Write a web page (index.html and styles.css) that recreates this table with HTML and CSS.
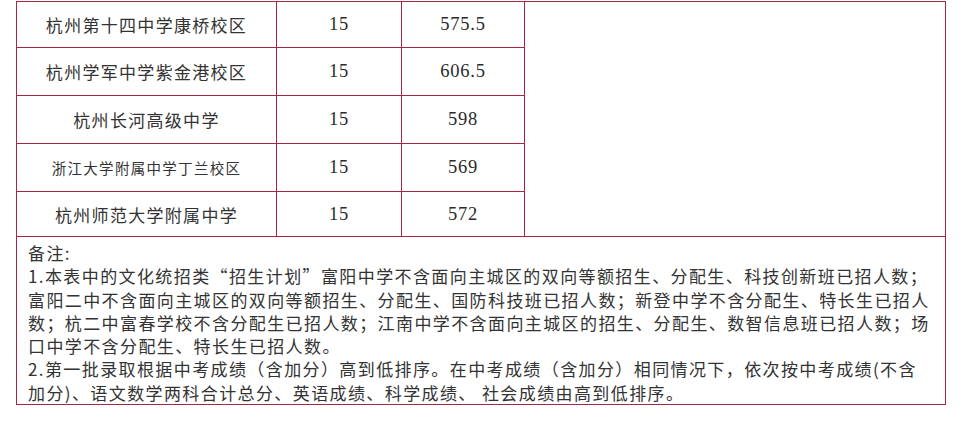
FILE: index.html
```html
<!DOCTYPE html>
<html lang="zh-CN">
<head>
<meta charset="utf-8">
<title>招生计划</title>
<link rel="stylesheet" href="styles.css">
</head>
<body>
<table class="plan">
  <colgroup>
    <col class="c-name">
    <col class="c-num">
    <col class="c-score">
    <col class="c-blank">
  </colgroup>
  <tbody>
    <tr class="r1">
      <td class="name">杭州第十四中学康桥校区</td>
      <td class="num">15</td>
      <td class="num">575.5</td>
      <td class="blank" rowspan="5"></td>
    </tr>
    <tr class="r2">
      <td class="name">杭州学军中学紫金港校区</td>
      <td class="num">15</td>
      <td class="num">606.5</td>
    </tr>
    <tr class="r3">
      <td class="name">杭州长河高级中学</td>
      <td class="num">15</td>
      <td class="num">598</td>
    </tr>
    <tr class="r4">
      <td class="name small">浙江大学附属中学丁兰校区</td>
      <td class="num">15</td>
      <td class="num">569</td>
    </tr>
    <tr class="r5">
      <td class="name">杭州师范大学附属中学</td>
      <td class="num">15</td>
      <td class="num">572</td>
    </tr>
    <tr class="notes-row">
      <td class="notes" colspan="4">
        <p>备注:</p>
        <p>1.本表中的文化统招类“招生计划”富阳中学不含面向主城区的双向等额招生、分配生、科技创新班已招人数；<br>富阳二中不含面向主城区的双向等额招生、分配生、国防科技班已招人数；新登中学不含分配生、特长生已招人<br>数；杭二中富春学校不含分配生已招人数；江南中学不含面向主城区的招生、分配生、数智信息班已招人数；场<br>口中学不含分配生、特长生已招人数。</p>
        <p>2.第一批录取根据中考成绩（含加分）高到低排序。在中考成绩（含加分）相同情况下，依次按中考成绩(不含<br>加分)、语文数学两科合计总分、英语成绩、科学成绩、 社会成绩由高到低排序。</p>
      </td>
    </tr>
  </tbody>
</table>
</body>
</html>
```

FILE: styles.css
```css
html, body {
  margin: 0;
  padding: 0;
  background: #ffffff;
}

body {
  padding: 1px 0 0 16px;
  color: #333333;
  font-family: "Noto Sans CJK SC", "Liberation Serif", sans-serif;
}

.plan {
  border-collapse: collapse;
  table-layout: fixed;
  width: 930px;
}

.c-name { width: 260px; }
.c-num { width: 125px; }
.c-score { width: 123px; }
.c-blank { width: 421px; }

.plan td {
  border: 1px solid #a92643;
  padding: 0;
  text-align: center;
  vertical-align: middle;
}

.r1 { height: 46px; }
.r2 { height: 48px; }
.r3 { height: 48px; }
.r4 { height: 48px; }
.r5 { height: 45px; }

.name {
  font-family: "Noto Sans CJK SC", sans-serif;
  font-size: 17px;
  font-weight: 400;
  letter-spacing: 1.3px;
}

.name.small {
  font-size: 14.5px;
  letter-spacing: 1.3px;
}

.num {
  font-family: "Liberation Serif", serif;
  font-size: 18.5px;
  letter-spacing: 0.8px;
  color: #2a2a2a;
}

.notes {
  text-align: left !important;
  padding: 4px 0 0 11px !important;
  font-family: "Noto Sans CJK SC", sans-serif;
  font-size: 17px;
  font-weight: 400;
  line-height: 23.3px;
  letter-spacing: 1.4px;
  white-space: nowrap;
}

.notes p {
  margin: 0;
}
```
